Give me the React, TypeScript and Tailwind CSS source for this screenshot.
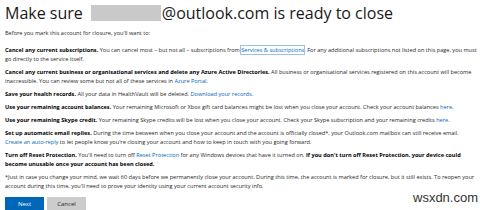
export default function App() {
  const link = 'text-[#0067b8]';
  return (
    <div className="relative w-[480px] h-[210px] overflow-hidden bg-white font-['Open_Sans',sans-serif] text-[#262626]">
      <div className="pl-[5px] pr-[3px] pt-[1px]">
        <h1 className="flex items-center text-[16px] leading-[24px] font-normal text-[#1a1a1a]">
          <span>Make sure</span>
          <span className="ml-[8px] inline-block w-[70px] h-[16px] bg-[#c9c9c9]" />
          <span className="ml-[1px]">@outlook.com is ready to close</span>
        </h1>
        <div className="mt-[4px] flex flex-col gap-[4px] text-[5.6px] leading-[9px]">
          <p className="mb-[4px]">Before you mark this account for closure, you'll want to:</p>
          <p>
            <b className="text-black">Cancel any current subscriptions.</b> You can cancel most – but not all – subscriptions from{' '}
            <a className={`${link} outline outline-1 outline-[#9cc3e6]`}>Services &amp; subscriptions</a>. For any additional subscriptions not listed on this page, you must go directly to the service itself.
          </p>
          <p>
            <b className="text-black">Cancel any current business or organisational services and delete any Azure Active Directories.</b> All business or organisational services registered on this account will become inaccessible. You can review some but not all of these services in{' '}
            <a className={link}>Azure Portal</a>.
          </p>
          <p>
            <b className="text-black">Save your health records.</b> All your data in HealthVault will be deleted.{' '}
            <a className={link}>Download your records.</a>
          </p>
          <p>
            <b className="text-black">Use your remaining account balances.</b> Your remaining Microsoft or Xbox gift card balances might be lost when you close your account. Check your account balances{' '}
            <a className={link}>here</a>.
          </p>
          <p>
            <b className="text-black">Use your remaining Skype credit.</b> Your remaining Skype credits will be lost when you close your account. Check your Skype subscription and your remaining credits{' '}
            <a className={link}>here</a>.
          </p>
          <p>
            <b className="text-black">Set up automatic email replies.</b> During the time between when you close your account and the account is officially closed*, your Outlook.com mailbox can still receive email.{' '}
            <a className={link}>Create an auto-reply</a> to let people know you're closing your account and how to keep in touch with you going forward.
          </p>
          <p>
            <b className="text-black">Turn off Reset Protection.</b> You'll need to turn off <a className={link}>Reset Protection</a> for any Windows devices that have it turned on.{' '}
            <b className="text-black">If you don't turn off Reset Protection, your device could become unusable once your account has been closed.</b>
          </p>
          <p>
            *Just in case you change your mind, we wait 60 days before we permanently close your account. During this time, the account is marked for closure, but it still exists. To reopen your account during this time, you'll need to prove your identity using your current account security info.
          </p>
        </div>
        <div className="mt-[6px] flex gap-[3px] text-[6px]">
          <button className="w-[39px] h-[14px] bg-[#0067b8] text-white">Next</button>
          <button className="w-[39px] h-[14px] bg-[#cccccc] text-[#262626]">Cancel</button>
        </div>
      </div>
      <div className="absolute left-[413px] top-[190px] text-[13px] leading-[16px] text-[#333] font-['Liberation_Sans',sans-serif]">
        wsxdn.com
      </div>
    </div>
  );
}
